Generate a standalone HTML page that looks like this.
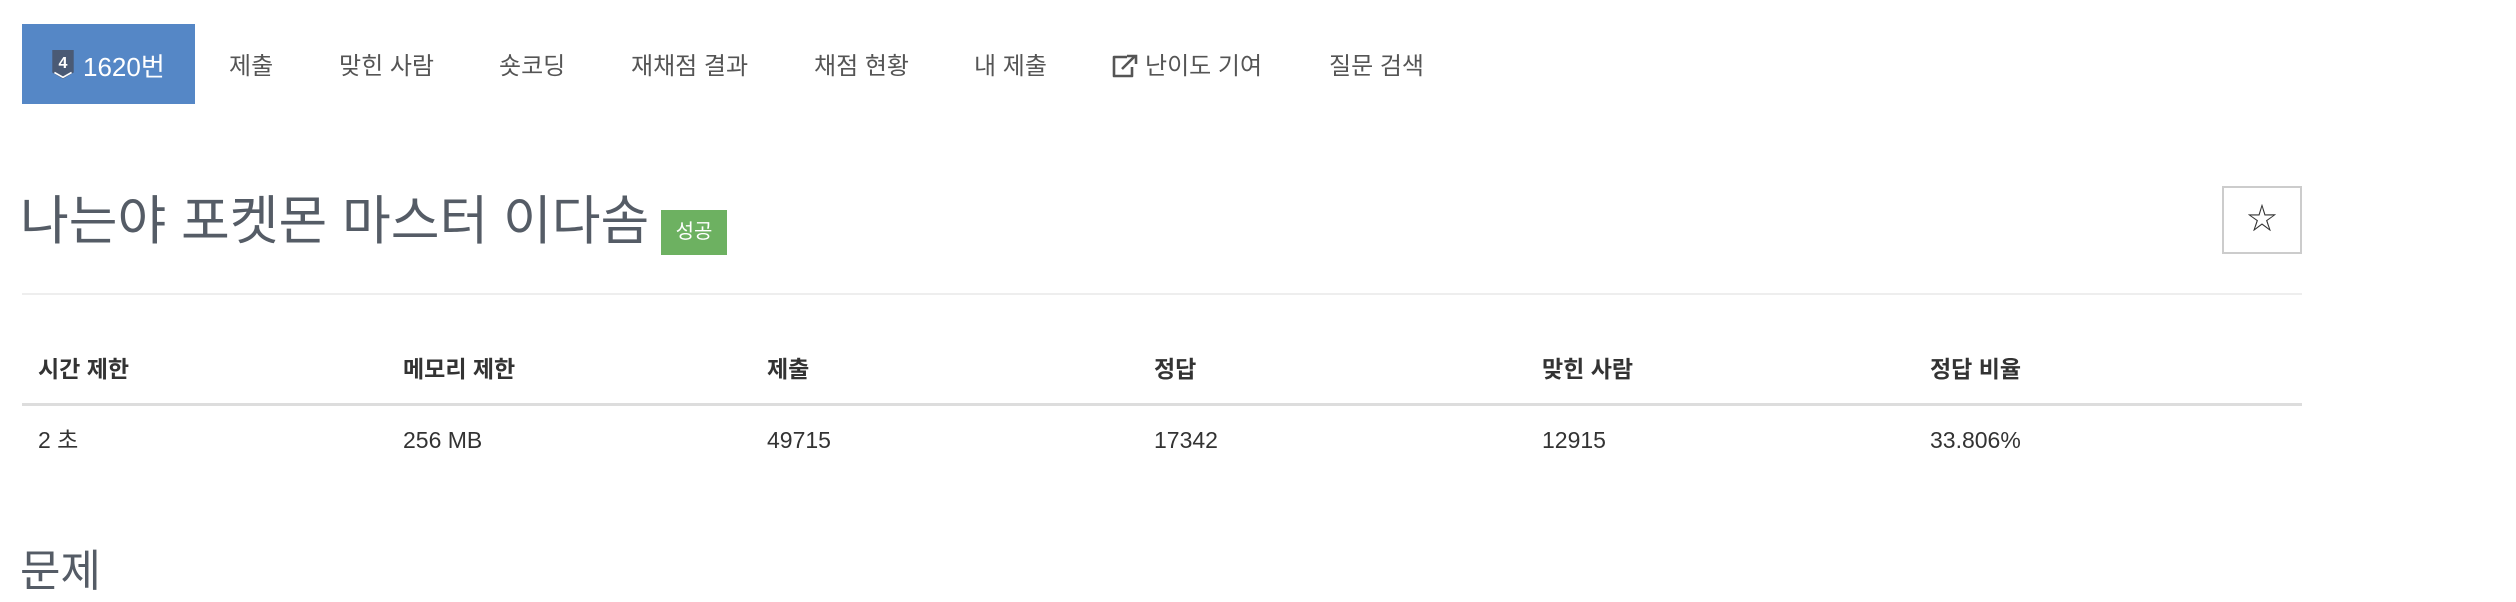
<!DOCTYPE html>
<html><head><meta charset="utf-8"><style>
body{margin:0;width:2516px;height:562px;overflow:hidden;background:#fff;font-family:"Liberation Sans","Noto Sans CJK KR",sans-serif;color:#333;position:relative}
.a{position:absolute;white-space:nowrap}
.nav{font-size:24px;color:#555;top:51px;line-height:32px}
.th{font-size:23px;font-weight:bold;top:353px;line-height:32px}
.td{font-size:23px;top:424px;line-height:32px}
</style></head><body>
<div class="a" style="left:22px;top:24px;width:173px;height:80px;background:#5587c6"></div>
<svg class="a" style="left:52px;top:50px" width="22" height="30" viewBox="0 0 20 28"><path d="M0 0H20V21L10 27L0 21Z" fill="#4a5a75"/><path d="M2 21L10 25.5L18 21" stroke="#fff" stroke-width="1.5" fill="none"/><text x="10" y="17" font-size="15" font-weight="bold" fill="#fff" text-anchor="middle" font-family="Liberation Sans">4</text></svg>
<div class="a nav" style="left:83px;color:#fff;font-size:26px">1620번</div>
<div class="a nav" style="left:229px">제출</div>
<div class="a nav" style="left:339px">맞힌 사람</div>
<div class="a nav" style="left:499px">숏코딩</div>
<div class="a nav" style="left:631px">재채점 결과</div>
<div class="a nav" style="left:814px">채점 현황</div>
<div class="a nav" style="left:974px">내 제출</div>
<svg class="a" style="left:1112px;top:54px" width="26" height="24" viewBox="0 0 26 24"><path d="M15 3H2V22H20V13" stroke="#555" stroke-width="2.6" fill="none" stroke-linejoin="round"/><path d="M10 15L23 2M15 2H24V10" stroke="#555" stroke-width="2.6" fill="none"/></svg>
<div class="a nav" style="left:1145px">난이도 기여</div>
<div class="a nav" style="left:1329px">질문 검색</div>
<div class="a" style="left:20px;top:187px;font-size:53px;line-height:70px;color:#555c66">나는야 포켓몬 마스터 이다솜</div>
<div class="a" style="left:661px;top:210px;width:66px;height:45px;background:#6db161;color:#fff;font-size:20px;line-height:45px;text-align:center">성공</div>
<div class="a" style="left:2222px;top:186px;width:76px;height:64px;border:2px solid #ccc;text-align:center;line-height:64px;font-size:30px;color:#333">☆</div>
<div class="a" style="left:22px;top:293px;width:2280px;height:2px;background:#eee"></div>
<div class="th a" style="left:38px">시간 제한</div>
<div class="th a" style="left:403px">메모리 제한</div>
<div class="th a" style="left:767px">제출</div>
<div class="th a" style="left:1154px">정답</div>
<div class="th a" style="left:1542px">맞힌 사람</div>
<div class="th a" style="left:1930px">정답 비율</div>
<div class="a" style="left:22px;top:403px;width:2280px;height:3px;background:#ddd"></div>
<div class="td a" style="left:38px">2 초</div>
<div class="td a" style="left:403px">256 MB</div>
<div class="td a" style="left:767px">49715</div>
<div class="td a" style="left:1154px">17342</div>
<div class="td a" style="left:1542px">12915</div>
<div class="td a" style="left:1930px">33.806%</div>
<div class="a" style="left:20px;top:542px;font-size:44px;line-height:60px;color:#555c66">문제</div>
</body></html>
